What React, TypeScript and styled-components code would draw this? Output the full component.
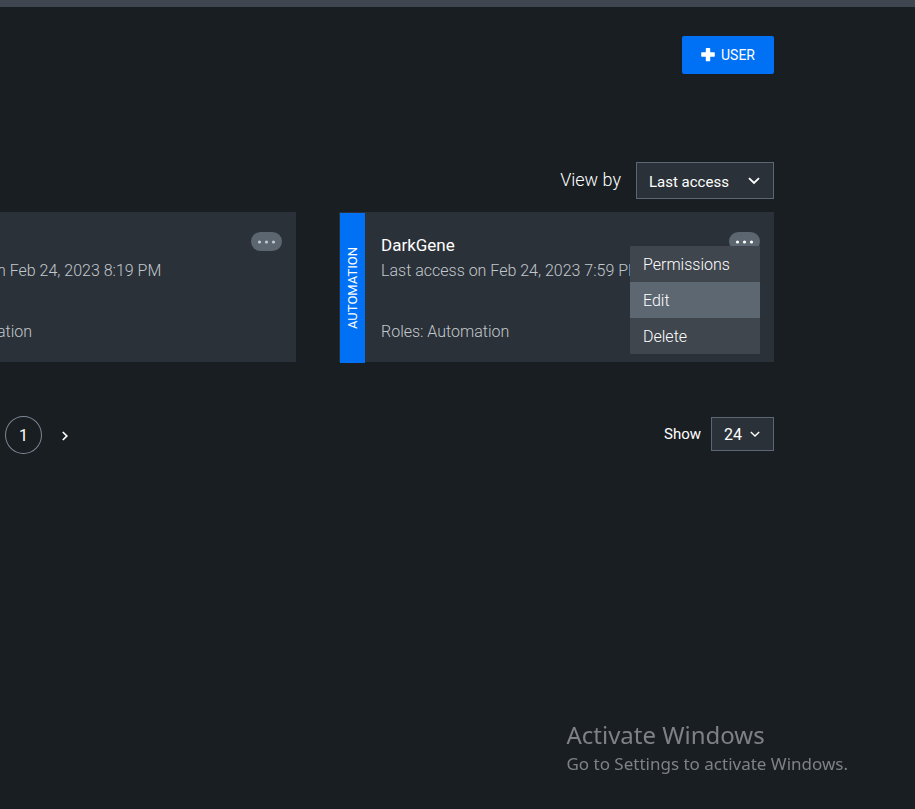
import React from 'react';
import styled, { createGlobalStyle } from 'styled-components';

const color = {
  page: '#191e22',
  bar: '#3f4650',
  card: '#2b3138',
  line: '#5d6672',
  pill: '#5c6671',
  menu: '#3f464e',
  active: '#5d6772',
  blue: '#0071f5',
  text: '#ffffff',
  muted: '#c2c8ce',
  watermark: '#7f8284',
};

const GlobalStyle = createGlobalStyle`
  *, *::before, *::after { box-sizing: border-box; }
  body {
    margin: 0;
    background: ${color.page};
    color: ${color.text};
    font-family: Roboto, "Liberation Sans", sans-serif;
    font-size: 16px;
  }
  button, select { font-family: inherit; color: inherit; }
  p, h2, ul { margin: 0; padding: 0; }
`;

const TopBar = styled.div`
  height: 7px;
  background: ${color.bar};
`;

const Main = styled.main`
  display: flex;
  flex-direction: column;
  padding: 29px 141px 0 0;
`;

const Header = styled.header`
  display: flex;
  justify-content: flex-end;
`;

const AddButton = styled.button`
  display: flex;
  align-items: center;
  justify-content: center;
  gap: 6px;
  width: 92px;
  height: 38px;
  padding: 0;
  border: 0;
  border-radius: 2px;
  background: ${color.blue};
  font-size: 14px;
  cursor: pointer;
`;

const FilterRow = styled.div`
  display: flex;
  justify-content: flex-end;
  align-items: flex-start;
  margin-top: 88px;
`;

const FilterLabel = styled.label`
  margin-right: 15px;
  font-size: 18px;
  font-weight: 300;
  line-height: 36px;
`;

const SelectWrap = styled.div`
  position: relative;
  display: flex;
`;

const Select = styled.select<{ $compact?: boolean }>`
  appearance: none;
  width: ${({ $compact }) => ($compact ? 63 : 138)}px;
  height: ${({ $compact }) => ($compact ? 34 : 37)}px;
  padding: ${({ $compact }) => ($compact ? '0 12px' : '2px 12px 0')};
  border: 1px solid ${color.line};
  border-radius: 0;
  background: ${color.card};
  font-size: ${({ $compact }) => ($compact ? 16 : 15)}px;
  cursor: pointer;
`;

const SelectArrow = styled.svg`
  position: absolute;
  top: 0;
  bottom: 0;
  right: 14px;
  height: 100%;
  pointer-events: none;
`;

const Cards = styled.section`
  display: grid;
  grid-template-columns: minmax(0, 296fr) minmax(0, 435fr);
  gap: 43px;
  margin-top: 13px;
`;

const Card = styled.article`
  position: relative;
  display: flex;
  height: 150px;
  background: ${color.card};
`;

const Tag = styled.div`
  display: flex;
  align-items: center;
  justify-content: center;
  width: 25px;
  height: 150px;
  margin: 1px 0 0 1px;
  background: ${color.blue};
  font-size: 13px;
  line-height: 25px;
  writing-mode: vertical-rl;
  rotate: 180deg;
`;

const CardBody = styled.div<{ $tagged?: boolean }>`
  flex: 1;
  display: flex;
  flex-direction: column;
  margin-left: ${({ $tagged }) => ($tagged ? 0 : -3)}px;
  padding: 20px 14px 18px ${({ $tagged }) => ($tagged ? 16 : 0)}px;
`;

const CardName = styled.h2`
  height: 26px;
  font-size: 17px;
  font-weight: 400;
  line-height: 26px;
`;

const CardLine = styled.p`
  color: ${color.muted};
  font-size: 16px;
  font-weight: 300;
  line-height: 25px;
  white-space: nowrap;

  &:last-child { margin-top: auto; }
`;

const MenuAnchor = styled.div`
  position: absolute;
  top: 20px;
  right: 14px;
`;

const MoreButton = styled.button<{ $open?: boolean }>`
  display: flex;
  align-items: center;
  justify-content: center;
  width: 31px;
  height: 19px;
  padding: 1px 0 0;
  border: 0;
  border-radius: 10px;
  background: ${color.pill};
  color: ${({ $open }) => ($open ? color.text : color.muted)};
  cursor: pointer;
`;

const Menu = styled.ul`
  position: absolute;
  top: 14px;
  right: 0;
  width: 130px;
  background: ${color.menu};
  list-style: none;
`;

const MenuItem = styled.button<{ $active?: boolean }>`
  display: block;
  width: 100%;
  height: 36px;
  padding: 0 13px;
  border: 0;
  background: ${({ $active }) => ($active ? color.active : 'transparent')};
  font-size: 16px;
  font-weight: 300;
  text-align: left;
  cursor: pointer;
`;

const Footer = styled.footer`
  display: flex;
  justify-content: space-between;
  align-items: center;
  margin-top: 54px;
`;

const Pager = styled.nav`
  display: flex;
  align-items: center;
  gap: 12px;
  padding-left: 5px;
`;

const PageButton = styled.button<{ $current?: boolean }>`
  display: flex;
  align-items: center;
  justify-content: center;
  width: ${({ $current }) => ($current ? 37 : 22)}px;
  height: 38px;
  padding: ${({ $current }) => ($current ? '0' : '2px 0 0')};
  border: ${({ $current }) => ($current ? `1px solid #7d8794` : '0')};
  border-radius: 50%;
  background: transparent;
  font-size: 16px;
  cursor: pointer;
`;

const PageSize = styled.div`
  display: flex;
  align-items: center;
  gap: 10px;
  margin-bottom: 2px;
`;

const PageSizeLabel = styled.label`
  font-size: 15px;
`;

const Watermark = styled.aside`
  position: fixed;
  right: 67px;
  bottom: 32px;
  color: ${color.watermark};
  font-family: "Noto Sans", "Open Sans", sans-serif;
`;

const WatermarkTitle = styled.p`
  font-size: 24px;
  line-height: 32px;
`;

const WatermarkText = styled.p`
  font-size: 17px;
  line-height: 26px;
`;

const Plus = () => (
  <svg width="14" height="14" viewBox="0 0 14 14" aria-hidden="true">
    <path d="M5.4 0h3.200q.6 0 .6.6V4.300h4q.6 0 .6.6v3.200q0 .6-.6.6H9.200v4q0 .6-.6.6H5.400q-.6 0-.6-.6V8.700H.8q-.6 0-.6-.6V4.900q0-.6.6-.6h4V.6q0-.6.6-.6z" fill="currentColor" />
  </svg>
);

const Chevron = ({ size }: { size: number }) => (
  <SelectArrow width={size} viewBox="0 0 12 12" aria-hidden="true">
    <path d="M1 3.700 6 8.500l5-4.800" fill="none" stroke="#fff" strokeWidth="1.800" />
  </SelectArrow>
);

const Dots = () => (
  <svg width="19" height="4" viewBox="0 0 19 4" aria-hidden="true">
    <circle cx="2.500" cy="2" r="1.600" fill="currentColor" />
    <circle cx="9.500" cy="2" r="1.600" fill="currentColor" />
    <circle cx="16.500" cy="2" r="1.600" fill="currentColor" />
  </svg>
);

const actions = ['Permissions', 'Edit', 'Delete'];

export default function App() {
  return (
    <>
      <GlobalStyle />
      <TopBar />
      <Main>
        <Header>
          <AddButton type="button"><Plus />USER</AddButton>
        </Header>

        <FilterRow>
          <FilterLabel htmlFor="view-by">View by</FilterLabel>
          <SelectWrap>
            <Select id="view-by" defaultValue="Last access">
              <option>Last access</option>
            </Select>
            <Chevron size={12} />
          </SelectWrap>
        </FilterRow>

        <Cards>
          <Card>
            <CardBody>
              <CardName />
              <CardLine>n Feb 24, 2023 8:19 PM</CardLine>
              <CardLine>ation</CardLine>
            </CardBody>
            <MenuAnchor>
              <MoreButton type="button" aria-label="More actions"><Dots /></MoreButton>
            </MenuAnchor>
          </Card>
          <Card>
            <Tag>AUTOMATION</Tag>
            <CardBody $tagged>
              <CardName>DarkGene</CardName>
              <CardLine>Last access on Feb 24, 2023 7:59 PM</CardLine>
              <CardLine>Roles: Automation</CardLine>
            </CardBody>
            <MenuAnchor>
              <MoreButton type="button" aria-label="More actions" aria-expanded="true" $open>
                <Dots />
              </MoreButton>
              <Menu>
                {actions.map((action) => (
                  <li key={action}>
                    <MenuItem type="button" $active={action === 'Edit'}>{action}</MenuItem>
                  </li>
                ))}
              </Menu>
            </MenuAnchor>
          </Card>
        </Cards>

        <Footer>
          <Pager aria-label="Pages">
            <PageButton type="button" aria-current="page" $current>1</PageButton>
            <PageButton type="button" aria-label="Next page">
              <svg width="8" height="10" viewBox="0 0 8 10" aria-hidden="true">
                <path d="M1.800 1 5.800 5 1.800 9" fill="none" stroke="#fff" strokeWidth="1.700" />
              </svg>
            </PageButton>
          </Pager>
          <PageSize>
            <PageSizeLabel htmlFor="page-size">Show</PageSizeLabel>
            <SelectWrap>
              <Select id="page-size" defaultValue="24" $compact>
                <option>24</option>
              </Select>
              <Chevron size={10} />
            </SelectWrap>
          </PageSize>
        </Footer>
      </Main>
      <Watermark>
        <WatermarkTitle>Activate Windows</WatermarkTitle>
        <WatermarkText>Go to Settings to activate Windows.</WatermarkText>
      </Watermark>
    </>
  );
}
